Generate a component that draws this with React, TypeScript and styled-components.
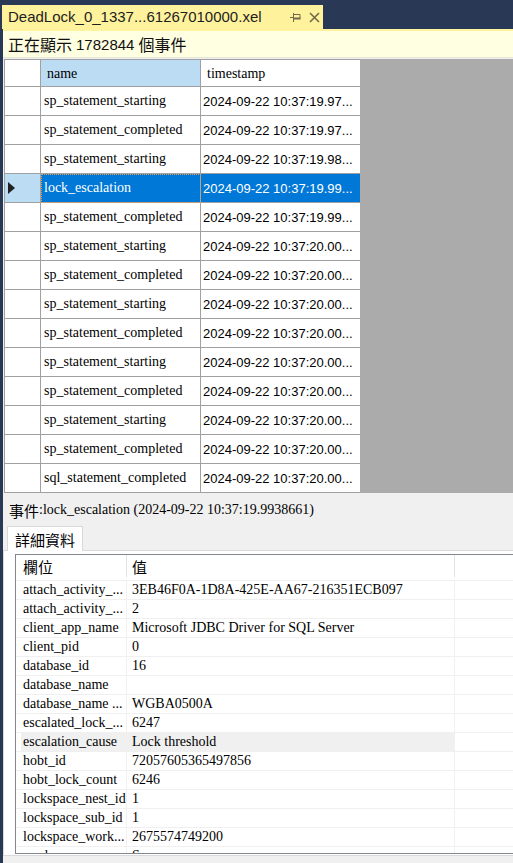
import styled, { createGlobalStyle } from 'styled-components';

const GlobalStyle = createGlobalStyle`
  html, body {
    margin: 0;
    padding: 0;
    background: #293955;
    overflow: hidden;
  }
  * { box-sizing: border-box; }
`;

const SERIF = `"Liberation Serif", "Noto Sans CJK TC", serif`;
const SANS = `"Liberation Sans", "Noto Sans CJK TC", sans-serif`;
const CJK = `"Noto Sans CJK TC", "Liberation Sans", sans-serif`;

interface EventRow {
  name: string;
  time: string;
  selected?: boolean;
}

const EVENTS: EventRow[] = [
  { name: 'sp_statement_starting', time: '2024-09-22 10:37:19.97...' },
  { name: 'sp_statement_completed', time: '2024-09-22 10:37:19.97...' },
  { name: 'sp_statement_starting', time: '2024-09-22 10:37:19.98...' },
  { name: 'lock_escalation', time: '2024-09-22 10:37:19.99...', selected: true },
  { name: 'sp_statement_completed', time: '2024-09-22 10:37:19.99...' },
  { name: 'sp_statement_starting', time: '2024-09-22 10:37:20.00...' },
  { name: 'sp_statement_completed', time: '2024-09-22 10:37:20.00...' },
  { name: 'sp_statement_starting', time: '2024-09-22 10:37:20.00...' },
  { name: 'sp_statement_completed', time: '2024-09-22 10:37:20.00...' },
  { name: 'sp_statement_starting', time: '2024-09-22 10:37:20.00...' },
  { name: 'sp_statement_completed', time: '2024-09-22 10:37:20.00...' },
  { name: 'sp_statement_starting', time: '2024-09-22 10:37:20.00...' },
  { name: 'sp_statement_completed', time: '2024-09-22 10:37:20.00...' },
  { name: 'sql_statement_completed', time: '2024-09-22 10:37:20.00...' },
  { name: 'sp_statement_starting', time: '2024-09-22 10:37:20.00...' },
];

interface Field {
  key: string;
  value: string;
  hover?: boolean;
}

const FIELDS: Field[] = [
  { key: 'attach_activity_...', value: '3EB46F0A-1D8A-425E-AA67-216351ECB097' },
  { key: 'attach_activity_...', value: '2' },
  { key: 'client_app_name', value: 'Microsoft JDBC Driver for SQL Server' },
  { key: 'client_pid', value: '0' },
  { key: 'database_id', value: '16' },
  { key: 'database_name', value: '' },
  { key: 'database_name ...', value: 'WGBA0500A' },
  { key: 'escalated_lock_...', value: '6247' },
  { key: 'escalation_cause', value: 'Lock threshold', hover: true },
  { key: 'hobt_id', value: '72057605365497856' },
  { key: 'hobt_lock_count', value: '6246' },
  { key: 'lockspace_nest_id', value: '1' },
  { key: 'lockspace_sub_id', value: '1' },
  { key: 'lockspace_work...', value: '2675574749200' },
  { key: 'mode', value: 'S' },
];

const Window = styled.div`
  width: 513px;
  height: 863px;
  display: flex;
  flex-direction: column;
  overflow: hidden;
`;

const TabStrip = styled.div`
  height: 29px;
  padding: 5px 0 0 2px;
  display: flex;
  background: #293955;
`;

const DocTab = styled.div`
  width: 321px;
  height: 24px;
  background: #fff29d;
  display: flex;
  align-items: center;
  padding: 0 0 0 6px;
`;

const DocTitle = styled.span`
  font-family: ${SANS};
  font-size: 15px;
  color: #1e1e1e;
  flex: 1;
  white-space: nowrap;
  line-height: 24px;
`;

const TabButton = styled.span`
  width: 18px;
  height: 24px;
  display: inline-flex;
  align-items: center;
  justify-content: center;
  color: #716a4a;
`;

const Body = styled.div`
  flex: 1;
  margin-left: 3px;
  display: flex;
  flex-direction: column;
  min-height: 0;
`;

const AccentLine = styled.div`
  height: 2px;
  background: #fff29d;
`;

const InfoBar = styled.div`
  height: 27px;
  background: #ffffe1;
  border-bottom: 1px solid #e8e8d8;
  display: flex;
  align-items: center;
  padding-left: 5px;
  font-family: ${CJK};
  font-size: 16px;
  color: #111;
`;

const InfoNumber = styled.span`
  font-family: ${SANS};
  font-size: 15px;
  margin: 0 4px;
`;

const GridArea = styled.div`
  height: 435px;
  display: flex;
  background: #f0f0f0;
  padding: 1px 0 0 1px;
  overflow: hidden;
`;

const EventGrid = styled.div`
  width: 356px;
  display: grid;
  grid-template-columns: 36px 160px 160px;
  grid-auto-rows: 29px;
  grid-template-rows: 27px;
  align-content: start;
  border-left: 1px solid #a0a0a0;
  border-top: 1px solid #a0a0a0;
  background: #ffffff;
`;

const Filler = styled.div`
  flex: 1;
  background: #ababab;
`;

const Cell = styled.div<{ $head?: boolean; $active?: boolean; $rowHead?: boolean; $focus?: boolean; $mono?: boolean }>`
  border-right: 1px solid #a0a0a0;
  border-bottom: 1px solid #a0a0a0;
  display: flex;
  align-items: center;
  overflow: hidden;
  white-space: nowrap;
  padding-left: ${({ $head }) => ($head ? '6px' : '3px')};
  padding-top: ${({ $head }) => ($head ? '1px' : '0')};
  font-family: ${({ $mono }) => ($mono ? SANS : SERIF)};
  font-size: ${({ $mono }) => ($mono ? '13px' : '14px')};
  color: ${({ $active }) => ($active ? '#ffffff' : '#000000')};
  background: ${({ $active, $rowHead }) => ($rowHead ? '#bcdcf4' : $active ? '#0078d7' : '#ffffff')};
  ${({ $focus }) => ($focus ? 'outline: 1px dotted #e8a050; outline-offset: -1px;' : '')}
`;

const TimeCell = styled(Cell)`
  padding-left: 2px;
`;

const BottomPane = styled.div`
  flex: 1;
  background: #f0f0f0;
  display: flex;
  flex-direction: column;
  min-height: 0;
`;

const EventLabel = styled.div`
  height: 33px;
  display: flex;
  align-items: center;
  padding: 1px 0 0 6px;
  font-family: ${SERIF};
  font-size: 14px;
  color: #000;
  white-space: nowrap;
`;

const CjkText = styled.span`
  font-family: ${CJK};
  font-size: 15px;
`;

const TabRow = styled.div`
  height: 24px;
  display: flex;
  padding-left: 4px;
`;

const PageTab = styled.div`
  width: 76px;
  height: 25px;
  background: #ffffff;
  border: 1px solid #d9d9d9;
  border-bottom: none;
  display: flex;
  align-items: center;
  padding-left: 7px;
  font-family: ${CJK};
  font-size: 15px;
  color: #000;
  position: relative;
  z-index: 1;
`;

const TabPage = styled.div`
  height: 306px;
  background: #ffffff;
  border: 1px solid #d9d9d9;
  border-right: none;
  padding: 3px 0 0 11px;
`;

const DetailGrid = styled.div`
  height: 300px;
  border: 1px solid #828790;
  border-right: none;
  overflow: hidden;
  background: #ffffff;
`;

const DetailRow = styled.div<{ $head?: boolean }>`
  display: grid;
  grid-template-columns: 5px 106px 328px 1fr;
  height: ${({ $head }) => ($head ? '26px' : '19px')};
  padding-bottom: ${({ $head }) => ($head ? '3px' : '0')};
  border-bottom: 1px solid #f0f0f0;
`;

const DetailCell = styled.div<{ $hover?: boolean; $head?: boolean }>`
  display: flex;
  align-items: center;
  overflow: hidden;
  white-space: nowrap;
  border-right: 1px solid ${({ $head }) => ($head ? '#e3e3e3' : '#f0f0f0')};
  background: ${({ $hover }) => ($hover ? '#f0f0f0' : 'transparent')};
  font-family: ${({ $head }) => ($head ? CJK : SERIF)};
  font-size: ${({ $head }) => ($head ? '15px' : '14px')};
  color: #000;
  padding-left: 2px;
`;

const ValueCell = styled(DetailCell)`
  padding-left: 5px;
`;

const Gutter = styled.div``;

const Rest = styled.div``;

const PinIcon = () => (
  <svg width="12" height="10" viewBox="0 0 12 10" fill="none" stroke="currentColor">
    <path d="M0 5.5h3.5" strokeWidth="1" />
    <path d="M3.5 1v9" strokeWidth="1" />
    <path d="M3.5 2.5h6.5v4h-6.5" strokeWidth="1" />
    <path d="M3.5 6.5h7" strokeWidth="2" />
  </svg>
);

const CloseIcon = () => (
  <svg width="11" height="11" viewBox="0 0 11 11" stroke="currentColor" strokeWidth="1.6">
    <path d="M1 1l9 9M10 1l-9 9" />
  </svg>
);

const RowArrow = () => (
  <svg width="8" height="12" viewBox="0 0 8 12">
    <path d="M0 0L7 6L0 12Z" fill="#222" />
  </svg>
);

export default function App() {
  return (
    <>
      <GlobalStyle />
      <Window>
        <TabStrip>
          <DocTab>
            <DocTitle>DeadLock_0_1337...61267010000.xel</DocTitle>
            <TabButton>
              <PinIcon />
            </TabButton>
            <TabButton>
              <CloseIcon />
            </TabButton>
          </DocTab>
        </TabStrip>
        <Body>
          <AccentLine />
          <InfoBar>
            正在顯示<InfoNumber>1782844</InfoNumber>個事件
          </InfoBar>
          <GridArea>
            <EventGrid>
              <Cell $head />
              <Cell $head $rowHead>name</Cell>
              <Cell $head>timestamp</Cell>
              {EVENTS.map((ev, i) => (
                <Row key={i} ev={ev} />
              ))}
            </EventGrid>
            <Filler />
          </GridArea>
          <BottomPane>
            <EventLabel>
              <CjkText>事件</CjkText>:lock_escalation (2024-09-22 10:37:19.9938661)
            </EventLabel>
            <TabRow>
              <PageTab>詳細資料</PageTab>
            </TabRow>
            <TabPage>
              <DetailGrid>
                <DetailRow $head>
                  <Gutter />
                  <DetailCell $head>欄位</DetailCell>
                  <ValueCell $head>值</ValueCell>
                  <Rest />
                </DetailRow>
                {FIELDS.map((f, i) => (
                  <DetailRow key={i}>
                    <Gutter />
                    <DetailCell $hover={f.hover}>{f.key}</DetailCell>
                    <ValueCell $hover={f.hover}>{f.value}</ValueCell>
                    <Rest />
                  </DetailRow>
                ))}
              </DetailGrid>
            </TabPage>
          </BottomPane>
        </Body>
      </Window>
    </>
  );
}

function Row({ ev }: { ev: EventRow }) {
  return (
    <>
      <Cell $rowHead={ev.selected}>{ev.selected ? <RowArrow /> : null}</Cell>
      <Cell $active={ev.selected} $focus={ev.selected}>
        {ev.name}
      </Cell>
      <TimeCell $active={ev.selected} $mono>
        {ev.time}
      </TimeCell>
    </>
  );
}
